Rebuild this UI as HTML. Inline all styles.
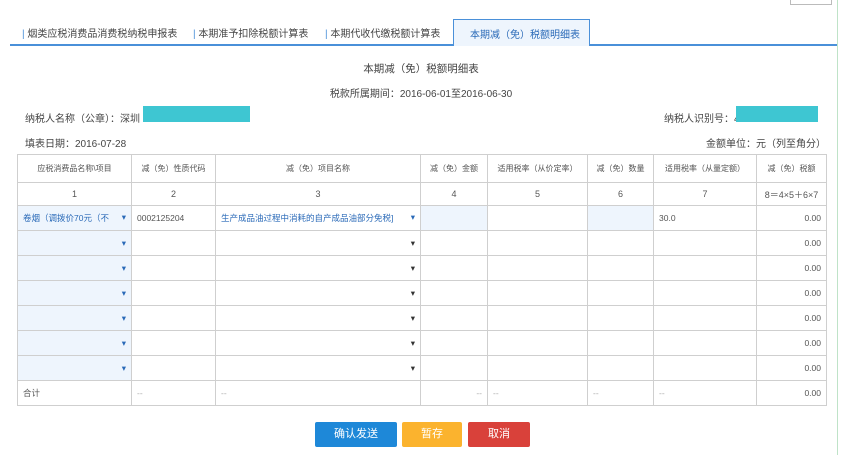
<!DOCTYPE html>
<html><head><meta charset="utf-8"><style>
body{margin:0;width:842px;height:455px;background:#fff;font-family:"Liberation Sans","Noto Sans CJK SC",sans-serif;color:#444;position:relative;overflow:hidden;font-size:10px}
.a{position:absolute;white-space:nowrap}
table{position:absolute;left:17px;top:154px;border-collapse:collapse;table-layout:fixed;width:809px}
td{border:1px solid #cfcfcf;font-size:8.5px;color:#555;padding:0 5px;overflow:hidden;white-space:nowrap}
.h td{height:27px;text-align:center;font-size:8px}
.n td{height:22px;text-align:center;font-size:9px}
.r td{height:24px}
.s{background:#eef5fd;color:#2a6ab8;text-align:right}
.sel{color:#333;text-align:right}
.bl{background:#eef5fd}
.rt{text-align:right}
.btn{position:absolute;top:422px;height:25px;color:#fff;font-size:11px;text-align:center;line-height:25px;border-radius:2px}
</style></head><body>
<div class="a" style="left:790px;top:0;width:40px;height:4px;border:1px solid #bbb;border-top:none"></div>
<div class="a" style="left:837px;top:0;width:1px;height:455px;background:#bfe3c8"></div>
<div class="a" style="left:10px;top:44px;width:827px;height:2px;background:#4a90d9"></div>
<div class="a" style="left:453px;top:19px;width:135px;height:26px;background:#eef5fd;border:1px solid #4a90d9;border-bottom:none"></div>
<div class="a" style="left:22px;top:25px;font-size:10px;color:#444"><span style="color:#4a90d9">|</span> 烟类应税消费品消费税纳税申报表</div>
<div class="a" style="left:193px;top:25px;font-size:10px;color:#444"><span style="color:#4a90d9">|</span> 本期准予扣除税额计算表</div>
<div class="a" style="left:325px;top:25px;font-size:10px;color:#444"><span style="color:#4a90d9">|</span> 本期代收代缴税额计算表</div>
<div class="a" style="left:470px;top:26px;font-size:10px;color:#2a6ab8">本期减（免）税额明细表</div>
<div class="a" style="left:0;width:842px;text-align:center;top:61px;font-size:10.5px">本期减（免）税额明细表</div>
<div class="a" style="left:0;width:842px;text-align:center;top:85px;font-size:10px">税款所属期间：2016-06-01至2016-06-30</div>
<div class="a" style="left:25px;top:110px">纳税人名称（公章）：深圳</div>
<div class="a" style="left:143px;top:106px;width:107px;height:16px;background:#3ec6d2"></div>
<div class="a" style="left:664px;top:110px">纳税人识别号：4</div>
<div class="a" style="left:736px;top:106px;width:82px;height:16px;background:#3ec6d2"></div>
<div class="a" style="left:25px;top:135px">填表日期：2016-07-28</div>
<div class="a" style="left:706px;top:135px">金额单位：元（列至角分）</div>
<table>
<colgroup><col style="width:114px"><col style="width:84px"><col style="width:205px"><col style="width:67px"><col style="width:100px"><col style="width:66px"><col style="width:103px"><col style="width:70px"></colgroup>
<tr class="h"><td>应税消费品名称\项目</td><td>减（免）性质代码</td><td>减（免）项目名称</td><td>减（免）金额</td><td>适用税率（从价定率）</td><td>减（免）数量</td><td>适用税率（从量定额）</td><td>减（免）税额</td></tr>
<tr class="n"><td>1</td><td>2</td><td>3</td><td>4</td><td>5</td><td>6</td><td>7</td><td>8＝4×5＋6×7</td></tr>
<tr class="r"><td class="bl" style="color:#2a6ab8">卷烟（调拨价70元（不 <span style="float:right">▾</span></td><td>0002125204</td><td style="color:#2a6ab8">生产成品油过程中消耗的自产成品油部分免税] <span style="float:right">▾</span></td><td class="bl"></td><td></td><td class="bl"></td><td>30.0</td><td class="rt">0.00</td></tr>
<tr class="r"><td class="s">▾</td><td></td><td class="sel">▾</td><td></td><td></td><td></td><td></td><td class="rt">0.00</td></tr>
<tr class="r"><td class="s">▾</td><td></td><td class="sel">▾</td><td></td><td></td><td></td><td></td><td class="rt">0.00</td></tr>
<tr class="r"><td class="s">▾</td><td></td><td class="sel">▾</td><td></td><td></td><td></td><td></td><td class="rt">0.00</td></tr>
<tr class="r"><td class="s">▾</td><td></td><td class="sel">▾</td><td></td><td></td><td></td><td></td><td class="rt">0.00</td></tr>
<tr class="r"><td class="s">▾</td><td></td><td class="sel">▾</td><td></td><td></td><td></td><td></td><td class="rt">0.00</td></tr>
<tr class="r"><td class="s">▾</td><td></td><td class="sel">▾</td><td></td><td></td><td></td><td></td><td class="rt">0.00</td></tr>
<tr class="r"><td>合计</td><td style="color:#aaa">--</td><td style="color:#aaa">--</td><td class="rt" style="color:#aaa">--</td><td style="color:#aaa">--</td><td style="color:#aaa">--</td><td style="color:#aaa">--</td><td class="rt">0.00</td></tr>
</table>
<div class="btn" style="left:315px;width:82px;background:#1e88d8">确认发送</div>
<div class="btn" style="left:402px;width:60px;background:#fbb32e">暂存</div>
<div class="btn" style="left:468px;width:62px;background:#d9413a">取消</div>
</body></html>
